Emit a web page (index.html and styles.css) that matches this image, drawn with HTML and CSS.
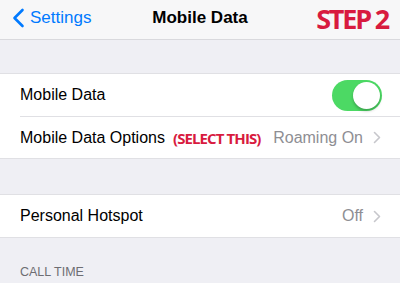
FILE: index.html
```html
<!DOCTYPE html>
<html lang="en">
<head>
  <meta charset="UTF-8">
  <meta name="viewport" content="width=device-width, initial-scale=1.0">
  <title>Mobile Data</title>
  <link rel="stylesheet" href="styles.css">
</head>
<body>
  <div class="navbar">
    <div class="back">
      <svg class="back-icon" width="13" height="20" viewBox="0 0 13 20">
        <path d="M10.5 2 L2.5 10 L10.5 18" fill="none" stroke="#007aff" stroke-width="2.6" stroke-linecap="round" stroke-linejoin="round"/>
      </svg>
      <span>Settings</span>
    </div>
    <div class="title">Mobile Data</div>
    <div class="step">STEP 2</div>
  </div>

  <div class="spacer first"></div>

  <div class="group">
    <div class="row">
      <span class="label">Mobile Data</span>
      <div class="toggle"><div class="knob"></div></div>
    </div>
    <div class="row">
      <span class="label">Mobile Data Options</span>
      <span class="note">(SELECT THIS)</span>
      <span class="value">Roaming On</span>
      <svg class="chev" width="8" height="13" viewBox="0 0 8 13">
        <path d="M1.5 1.5 L6.5 6.5 L1.5 11.5" fill="none" stroke="#c7c7cc" stroke-width="1.6" stroke-linecap="round" stroke-linejoin="round"/>
      </svg>
    </div>
  </div>

  <div class="spacer"></div>

  <div class="group">
    <div class="row">
      <span class="label">Personal Hotspot</span>
      <span class="value">Off</span>
      <svg class="chev" width="8" height="13" viewBox="0 0 8 13">
        <path d="M1.5 1.5 L6.5 6.5 L1.5 11.5" fill="none" stroke="#c7c7cc" stroke-width="1.6" stroke-linecap="round" stroke-linejoin="round"/>
      </svg>
    </div>
  </div>

  <div class="section-header">CALL TIME</div>
</body>
</html>
```

FILE: styles.css
```css
body {
  margin: 0;
  font-family: 'Liberation Sans', Arial, sans-serif;
  background-color: #efeff4;
  color: #000;
  width: 400px;
  height: 283px;
  overflow: hidden;
}
.navbar {
  height: 39px;
  background-color: #f7f7f8;
  border-bottom: 1px solid #d9d9dd;
  display: flex;
  align-items: center;
  position: relative;
  white-space: nowrap;
}
.back {
  display: flex;
  align-items: center;
  gap: 5px;
  padding-left: 12px;
  color: #007aff;
  font-size: 17px;
  padding-bottom: 3px;
}
.title {
  position: absolute;
  left: 0;
  right: 0;
  text-align: center;
  font-size: 17px;
  font-weight: bold;
  padding-bottom: 3px;
  pointer-events: none;
}
.step {
  margin-left: auto;
  margin-right: 12px;
  font-family: 'Open Sans', sans-serif;
  font-weight: bold;
  font-size: 27px;
  color: #d81b3f;
  letter-spacing: -2.2px;
  padding-bottom: 2px;
}
.spacer {
  height: 35px;
}
.spacer.first {
  height: 33px;
}
.group {
  background: #fff;
  border-top: 1px solid #e0e0e4;
  border-bottom: 1px solid #e0e0e4;
}
.row {
  height: 41px;
  display: flex;
  align-items: center;
  margin-left: 20px;
  padding-right: 19px;
  font-size: 16px;
  white-space: nowrap;
}
.row + .row {
  border-top: 1px solid #e0e0e4;
}
.group .row:first-child {
  height: 42px;
}
.note {
  margin-left: 8px;
  font-family: 'Open Sans', sans-serif;
  font-weight: bold;
  font-size: 15px;
  letter-spacing: -0.9px;
  color: #d81b3f;
}
.value {
  margin-left: auto;
  color: #8e8e93;
  margin-right: 10px;
}
.chev {
  display: block;
}
.toggle {
  margin-left: auto;
  margin-right: -1px;
  width: 50px;
  height: 31px;
  border-radius: 16px;
  background: #4cd964;
  position: relative;
}
.knob {
  position: absolute;
  right: 2px;
  top: 2px;
  width: 27px;
  height: 27px;
  border-radius: 50%;
  background: #fff;
  box-shadow: 0 2px 3px rgba(0, 0, 0, 0.25);
}
.section-header {
  padding: 27px 20px 0;
  font-size: 12.5px;
  color: #6d6d72;
}
```
